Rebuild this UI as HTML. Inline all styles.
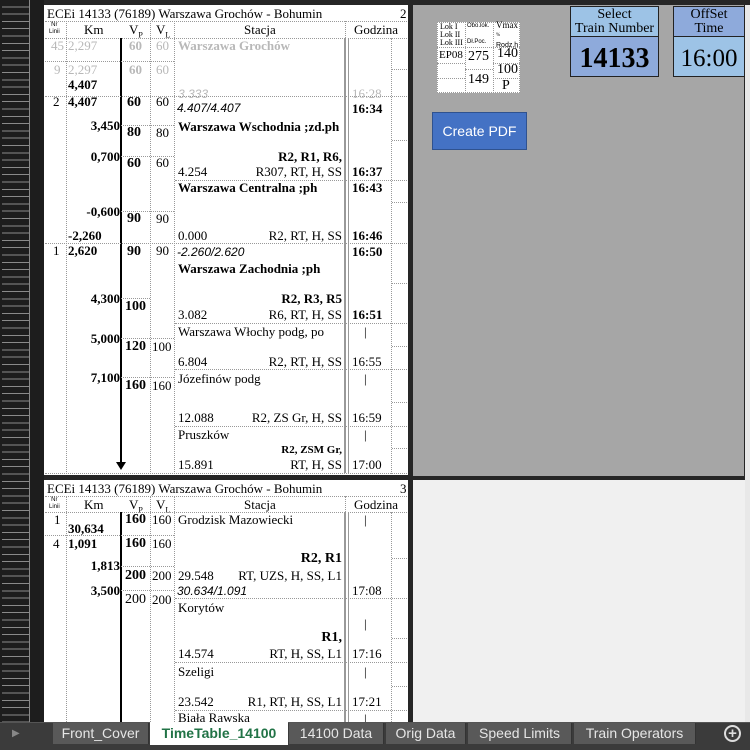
<!DOCTYPE html>
<html><head><meta charset="utf-8"><style>
*{margin:0;padding:0;box-sizing:border-box}
body{width:750px;height:750px;background:#262626;position:relative;overflow:hidden;font-family:"Liberation Serif",serif;font-size:13px;color:#000}
.a{position:absolute;white-space:nowrap;line-height:14px}
.r{position:absolute;white-space:nowrap;line-height:14px;transform:translateX(-100%)}
.b{font-weight:bold}
.g{color:#b8b8b8}
.i{font-style:italic;font-family:"Liberation Sans",sans-serif;font-size:12px}
.l{position:absolute;background:#000}
.dh{position:absolute;height:0;border-top:1px dotted #999}
.dv{position:absolute;width:0;border-left:1px dotted #999}
.page{position:absolute;background:#fff}
.rh{position:absolute;left:0;width:44px;background:#1d1d1d}
.tab{position:absolute;top:723px;height:21px;background:#595959;color:#e6e6e6;font-family:"Liberation Sans",sans-serif;font-size:14px;text-align:center;line-height:20px;border-right:1px solid #333}
</style></head><body>
<div class="rh" style="top:0;height:722px;background:repeating-linear-gradient(to bottom,#1d1d1d 0,#1d1d1d 6.3px,#8a8a8a 6.3px,#8a8a8a 7.3px)"></div>
<div style="position:absolute;left:0;top:0;width:2px;height:722px;background:#1d1d1d"></div>
<div style="position:absolute;left:29px;top:0;width:15px;height:722px;background:#1d1d1d;border-left:1px solid #888"></div>

<!-- Page 1 -->
<div class="page" style="left:44px;top:5px;width:364px;height:470px"></div>
<div class="a" style="left:47px;top:7px">ECEi 14133 (76189) Warszawa Grochów - Bohumin</div>
<div class="a" style="left:400px;top:7px">2</div>
<div class="dh" style="left:45px;top:21px;width:362px"></div>
<div class="a" style="left:49px;top:22px;font-size:6px;line-height:7px;text-align:center;font-family:'Liberation Sans',sans-serif">Nr<br>Linii</div>
<div class="a" style="left:84px;top:23px">Km</div>
<div class="a" style="left:129px;top:23px">V<sub style="font-size:8px">P</sub></div>
<div class="a" style="left:156px;top:23px">V<sub style="font-size:8px">L</sub></div>
<div class="a" style="left:244px;top:23px">Stacja</div>
<div class="a" style="left:354px;top:23px">Godzina</div>
<div class="dh" style="left:45px;top:38px;width:362px"></div>
<div class="dv" style="left:66px;top:21px;height:453px"></div>
<div class="dv" style="left:150px;top:21px;height:453px"></div>
<div class="dv" style="left:174px;top:21px;height:453px"></div>
<div class="dv" style="left:345px;top:21px;height:17px"></div>
<div class="dv" style="left:391px;top:38px;height:436px"></div>
<div class="l" style="left:344px;top:38px;width:5px;height:435px;background:#fff;border-left:2px solid #999;border-right:1px solid #999"></div>
<div class="l" style="left:120px;top:38px;width:2px;height:426px"></div>
<div style="position:absolute;left:116px;top:462px;width:0;height:0;border-left:5px solid transparent;border-right:5px solid transparent;border-top:8px solid #000"></div>
<div class="a g" style="left:51px;top:39px">45</div><div class="a g" style="left:68px;top:39px">2,297</div><div class="a g b" style="left:129px;top:39px">60</div><div class="a g" style="left:156px;top:39px">60</div><div class="a g b" style="left:178px;top:39px;font-size:13px">Warszawa Grochów</div>
<div class="dh" style="left:45px;top:61px;width:129px"></div><div class="dh" style="left:392px;top:69px;width:15px"></div>
<div class="a g" style="left:54px;top:63px">9</div><div class="a g" style="left:68px;top:63px">2,297</div><div class="a g b" style="left:129px;top:63px">60</div><div class="a g" style="left:156px;top:63px">60</div>
<div class="a b" style="left:68px;top:78px">4,407</div>
<div class="a i g" style="left:178px;top:87px">3.333</div><div class="a g" style="left:352px;top:87px;font-size:13px">16:28</div>
<div class="dh" style="left:45px;top:96px;width:362px"></div>
<div class="a" style="left:53px;top:95px">2</div><div class="a b" style="left:68px;top:95px">4,407</div><div class="a b" style="left:127px;top:96px;font-size:14px">60</div><div class="a" style="left:156px;top:95px">60</div>
<div class="a i" style="left:177px;top:101px">4.407/4.407</div><div class="a b" style="left:352px;top:102px;font-size:13px">16:34</div>
<div class="dh" style="left:392px;top:140px;width:15px"></div>
<div class="r b" style="left:120px;top:119px">3,450</div>
<div class="dh" style="left:121px;top:125px;width:53px"></div>
<div class="a b" style="left:178px;top:120px;font-size:13px">Warszawa Wschodnia ;zd.ph</div>
<div class="a b" style="left:127px;top:126px;font-size:14px">80</div><div class="a" style="left:156px;top:126px">80</div>
<div class="r b" style="left:120px;top:150px">0,700</div>
<div class="dh" style="left:121px;top:156px;width:53px"></div>
<div class="r b" style="left:342px;top:150px">R2, R1, R6,</div>
<div class="a b" style="left:127px;top:157px;font-size:14px">60</div><div class="a" style="left:156px;top:156px">60</div>
<div class="a" style="left:178px;top:165px">4.254</div><div class="r" style="left:342px;top:165px">R307, RT, H, SS</div><div class="a b" style="left:352px;top:165px;font-size:13px">16:37</div>
<div class="dh" style="left:175px;top:180px;width:232px"></div>
<div class="a b" style="left:178px;top:181px;font-size:13px">Warszawa Centralna ;ph</div><div class="a b" style="left:352px;top:181px;font-size:13px">16:43</div>
<div class="dh" style="left:392px;top:202px;width:15px"></div>
<div class="r b" style="left:120px;top:205px">-0,600</div>
<div class="dh" style="left:121px;top:211px;width:53px"></div>
<div class="a b" style="left:127px;top:212px;font-size:14px">90</div><div class="a" style="left:156px;top:212px">90</div>
<div class="a b" style="left:68px;top:229px">-2,260</div><div class="a" style="left:178px;top:229px">0.000</div><div class="r" style="left:342px;top:229px">R2, RT, H, SS</div><div class="a b" style="left:352px;top:229px;font-size:13px">16:46</div>
<div class="dh" style="left:45px;top:243px;width:362px"></div>
<div class="a" style="left:53px;top:244px">1</div><div class="a b" style="left:68px;top:244px">2,620</div><div class="a b" style="left:127px;top:245px;font-size:14px">90</div><div class="a" style="left:156px;top:244px">90</div>
<div class="a i" style="left:177px;top:245px">-2.260/2.620</div><div class="a b" style="left:352px;top:245px;font-size:13px">16:50</div>
<div class="a b" style="left:178px;top:262px;font-size:13px">Warszawa Zachodnia ;ph</div>
<div class="dh" style="left:392px;top:283px;width:15px"></div>
<div class="r b" style="left:120px;top:292px">4,300</div>
<div class="dh" style="left:121px;top:298px;width:29px"></div>
<div class="r b" style="left:342px;top:292px">R2, R3, R5</div>
<div class="a b" style="left:125px;top:300px;font-size:14px">100</div>
<div class="a" style="left:178px;top:308px">3.082</div><div class="r" style="left:342px;top:308px">R6, RT, H, SS</div><div class="a b" style="left:352px;top:308px;font-size:13px">16:51</div>
<div class="dh" style="left:175px;top:323px;width:232px"></div>
<div class="a" style="left:178px;top:325px;font-size:13px">Warszawa Włochy podg, po</div><div class="a" style="left:364px;top:325px">|</div>
<div class="r b" style="left:120px;top:332px">5,000</div>
<div class="dh" style="left:121px;top:338px;width:53px"></div>
<div class="dh" style="left:392px;top:346px;width:15px"></div>
<div class="a b" style="left:125px;top:340px;font-size:14px">120</div><div class="a" style="left:152px;top:340px">100</div>
<div class="a" style="left:178px;top:355px">6.804</div><div class="r" style="left:342px;top:355px">R2, RT, H, SS</div><div class="a" style="left:352px;top:355px;font-size:13px">16:55</div>
<div class="dh" style="left:175px;top:369px;width:232px"></div>
<div class="a" style="left:178px;top:372px;font-size:13px">Józefinów podg</div><div class="a" style="left:364px;top:372px">|</div>
<div class="r b" style="left:120px;top:371px">7,100</div>
<div class="dh" style="left:121px;top:377px;width:53px"></div>
<div class="a b" style="left:125px;top:379px;font-size:14px">160</div><div class="a" style="left:152px;top:379px">160</div>
<div class="dh" style="left:392px;top:402px;width:15px"></div>
<div class="a" style="left:178px;top:411px">12.088</div><div class="r" style="left:342px;top:411px">R2, ZS Gr, H, SS</div><div class="a" style="left:352px;top:411px;font-size:13px">16:59</div>
<div class="dh" style="left:175px;top:426px;width:232px"></div>
<div class="a" style="left:178px;top:428px;font-size:13px">Pruszków</div><div class="a" style="left:364px;top:428px">|</div>
<div class="dh" style="left:392px;top:448px;width:15px"></div>
<div class="r b" style="left:342px;top:443px;font-size:11px">R2, ZSM Gr,</div>
<div class="a" style="left:178px;top:458px">15.891</div><div class="r" style="left:342px;top:458px">RT, H, SS</div><div class="a" style="left:352px;top:458px;font-size:13px">17:00</div>
<div class="dh" style="left:45px;top:473px;width:362px"></div>

<!-- right panel -->
<div style="position:absolute;left:413px;top:5px;width:331px;height:471px;background:#a6a6a6"></div>
<div style="position:absolute;left:745px;top:5px;width:5px;height:717px;background:#e8e8e8"></div>
<div style="position:absolute;left:437px;top:22px;width:83px;height:71px;background:#fff;border:1px dotted #999"></div>
<div class="dv" style="left:465px;top:22px;height:71px"></div><div class="dv" style="left:493px;top:22px;height:71px"></div>
<div class="dh" style="left:437px;top:47px;width:83px"></div>
<div class="dh" style="left:437px;top:63px;width:28px"></div><div class="dh" style="left:465px;top:69px;width:28px"></div><div class="dh" style="left:493px;top:63px;width:27px"></div>
<div class="dh" style="left:437px;top:78px;width:28px"></div><div class="dh" style="left:493px;top:78px;width:27px"></div>
<div class="a" style="left:440px;top:23px;font-size:8px;line-height:8px">Lok I<br>Lok II<br>Lok III</div>
<div class="a" style="left:467px;top:22px;font-size:6px;line-height:8px;font-family:'Liberation Sans',sans-serif">Obo.lok.<br><br>Dł.Poc.</div>
<div class="a" style="left:496px;top:21px;font-size:9px;line-height:8px">Vmax<br><span style="font-size:5px">%</span><br><span style="font-size:7px;font-family:'Liberation Sans',sans-serif">Rodz.h</span></div>
<div class="a" style="left:439px;top:48px;font-size:11px">EP08</div>
<div class="a" style="left:468px;top:50px;font-size:14px">275</div>
<div class="a" style="left:497px;top:47px;font-size:14px">140</div>
<div class="a" style="left:497px;top:63px;font-size:14px">100</div>
<div class="a" style="left:468px;top:73px;font-size:14px">149</div>
<div class="a" style="left:502px;top:79px;font-size:14px">P</div>
<div style="position:absolute;left:570px;top:6px;width:89px;height:71px;border:1px solid #222;background:#8eaadb"></div>
<div style="position:absolute;left:571px;top:7px;width:87px;height:30px;background:#9dc3e6;border-bottom:1px solid #222;text-align:center;font-size:14px;line-height:14px;padding-top:1px">Select<br>Train Number</div>
<div class="a b" style="left:571px;top:45px;width:87px;text-align:center;font-size:28px;line-height:28px">14133</div>
<div style="position:absolute;left:673px;top:6px;width:72px;height:71px;border:1px solid #222;background:#9dc3e6"></div>
<div style="position:absolute;left:674px;top:7px;width:70px;height:30px;background:#8eaadb;border-bottom:1px solid #222;text-align:center;font-size:14px;line-height:14px;padding-top:1px">OffSet<br>Time</div>
<div class="a" style="left:674px;top:45px;width:70px;text-align:center;font-size:25px;line-height:28px">16:00</div>
<div style="position:absolute;left:432px;top:112px;width:95px;height:38px;background:#4472c4;border:1px solid #2f528f;color:#fff;font-family:'Liberation Sans',sans-serif;font-size:14px;text-align:center;line-height:36px">Create PDF</div>

<!-- Page 2 -->
<div class="page" style="left:44px;top:480px;width:364px;height:242px"></div>
<div style="position:absolute;left:413px;top:480px;width:332px;height:242px;background:#f0f0f0"></div>
<div class="a" style="left:47px;top:482px">ECEi 14133 (76189) Warszawa Grochów - Bohumin</div>
<div class="a" style="left:400px;top:482px">3</div>
<div class="dh" style="left:45px;top:496px;width:362px"></div>
<div class="a" style="left:49px;top:497px;font-size:6px;line-height:7px;text-align:center;font-family:'Liberation Sans',sans-serif">Nr<br>Linii</div>
<div class="a" style="left:84px;top:498px">Km</div>
<div class="a" style="left:129px;top:498px">V<sub style="font-size:8px">P</sub></div>
<div class="a" style="left:156px;top:498px">V<sub style="font-size:8px">L</sub></div>
<div class="a" style="left:244px;top:498px">Stacja</div>
<div class="a" style="left:354px;top:498px">Godzina</div>
<div class="dh" style="left:45px;top:512px;width:362px"></div>
<div class="dv" style="left:66px;top:496px;height:226px"></div>
<div class="dv" style="left:150px;top:496px;height:226px"></div>
<div class="dv" style="left:174px;top:496px;height:226px"></div>
<div class="dv" style="left:345px;top:496px;height:16px"></div>
<div class="dv" style="left:391px;top:512px;height:210px"></div>
<div class="l" style="left:344px;top:512px;width:5px;height:210px;background:#fff;border-left:2px solid #999;border-right:1px solid #999"></div>
<div class="l" style="left:120px;top:512px;width:2px;height:210px"></div>
<div class="a" style="left:54px;top:513px">1</div><div class="a b" style="left:125px;top:513px;font-size:14px">160</div><div class="a" style="left:152px;top:513px">160</div>
<div class="a" style="left:178px;top:513px;font-size:13px">Grodzisk Mazowiecki</div><div class="a" style="left:364px;top:513px">|</div>
<div class="a b" style="left:68px;top:522px">30,634</div>
<div class="dh" style="left:45px;top:535px;width:129px"></div>
<div class="a" style="left:53px;top:537px">4</div><div class="a b" style="left:68px;top:537px">1,091</div><div class="a b" style="left:125px;top:537px;font-size:14px">160</div><div class="a" style="left:152px;top:537px">160</div>
<div class="dh" style="left:392px;top:558px;width:15px"></div>
<div class="r b" style="left:342px;top:552px;font-size:14px">R2, R1</div>
<div class="r b" style="left:120px;top:559px">1,813</div>
<div class="dh" style="left:121px;top:566px;width:53px"></div>
<div class="a b" style="left:125px;top:569px;font-size:14px">200</div><div class="a" style="left:152px;top:569px">200</div>
<div class="a" style="left:178px;top:569px">29.548</div><div class="r" style="left:342px;top:569px">RT, UZS, H, SS, L1</div>
<div class="r b" style="left:120px;top:584px">3,500</div>
<div class="dh" style="left:121px;top:590px;width:53px"></div>
<div class="a i" style="left:177px;top:584px">30.634/1.091</div><div class="a" style="left:352px;top:584px;font-size:13px">17:08</div>
<div class="dh" style="left:175px;top:598px;width:232px"></div>
<div class="a" style="left:125px;top:593px;font-size:14px">200</div><div class="a" style="left:152px;top:593px">200</div>
<div class="a" style="left:178px;top:601px;font-size:13px">Korytów</div><div class="a" style="left:364px;top:617px">|</div>
<div class="dh" style="left:392px;top:638px;width:15px"></div>
<div class="r b" style="left:342px;top:631px;font-size:14px">R1,</div>
<div class="a" style="left:178px;top:647px">14.574</div><div class="r" style="left:342px;top:647px">RT, H, SS, L1</div><div class="a" style="left:352px;top:647px;font-size:13px">17:16</div>
<div class="dh" style="left:175px;top:662px;width:232px"></div>
<div class="a" style="left:178px;top:665px;font-size:13px">Szeligi</div><div class="a" style="left:364px;top:665px">|</div>
<div class="dh" style="left:392px;top:686px;width:15px"></div>
<div class="a" style="left:178px;top:695px">23.542</div><div class="r" style="left:342px;top:695px">R1, RT, H, SS, L1</div><div class="a" style="left:352px;top:695px;font-size:13px">17:21</div>
<div class="dh" style="left:175px;top:710px;width:232px"></div>
<div class="a" style="left:178px;top:711px;font-size:13px">Biała Rawska</div><div class="a" style="left:364px;top:712px">|</div>

<!-- tab bar -->
<div style="position:absolute;left:0;top:722px;width:750px;height:28px;background:#3b3b3b;border-top:1px solid #555"></div>
<div class="a" style="left:12px;top:727px;color:#888;font-size:10px;font-family:'Liberation Sans',sans-serif">▶</div>
<div class="tab" style="left:53px;width:96px">Front_Cover</div>
<div style="position:absolute;left:150px;top:722px;width:138px;height:23px;background:#fff;color:#217346;font-family:'Liberation Sans',sans-serif;font-weight:bold;font-size:14px;text-align:center;line-height:22px">TimeTable_14100</div>
<div class="tab" style="left:289px;width:95px">14100 Data</div>
<div class="tab" style="left:386px;width:80px">Orig Data</div>
<div class="tab" style="left:468px;width:104px">Speed Limits</div>
<div class="tab" style="left:574px;width:122px">Train Operators</div>
<div style="position:absolute;left:724px;top:725px;width:17px;height:17px;border:2px solid #ddd;border-radius:50%;color:#ddd;font-family:'Liberation Sans',sans-serif;font-size:15px;font-weight:bold;text-align:center;line-height:13px">+</div>
</body></html>
